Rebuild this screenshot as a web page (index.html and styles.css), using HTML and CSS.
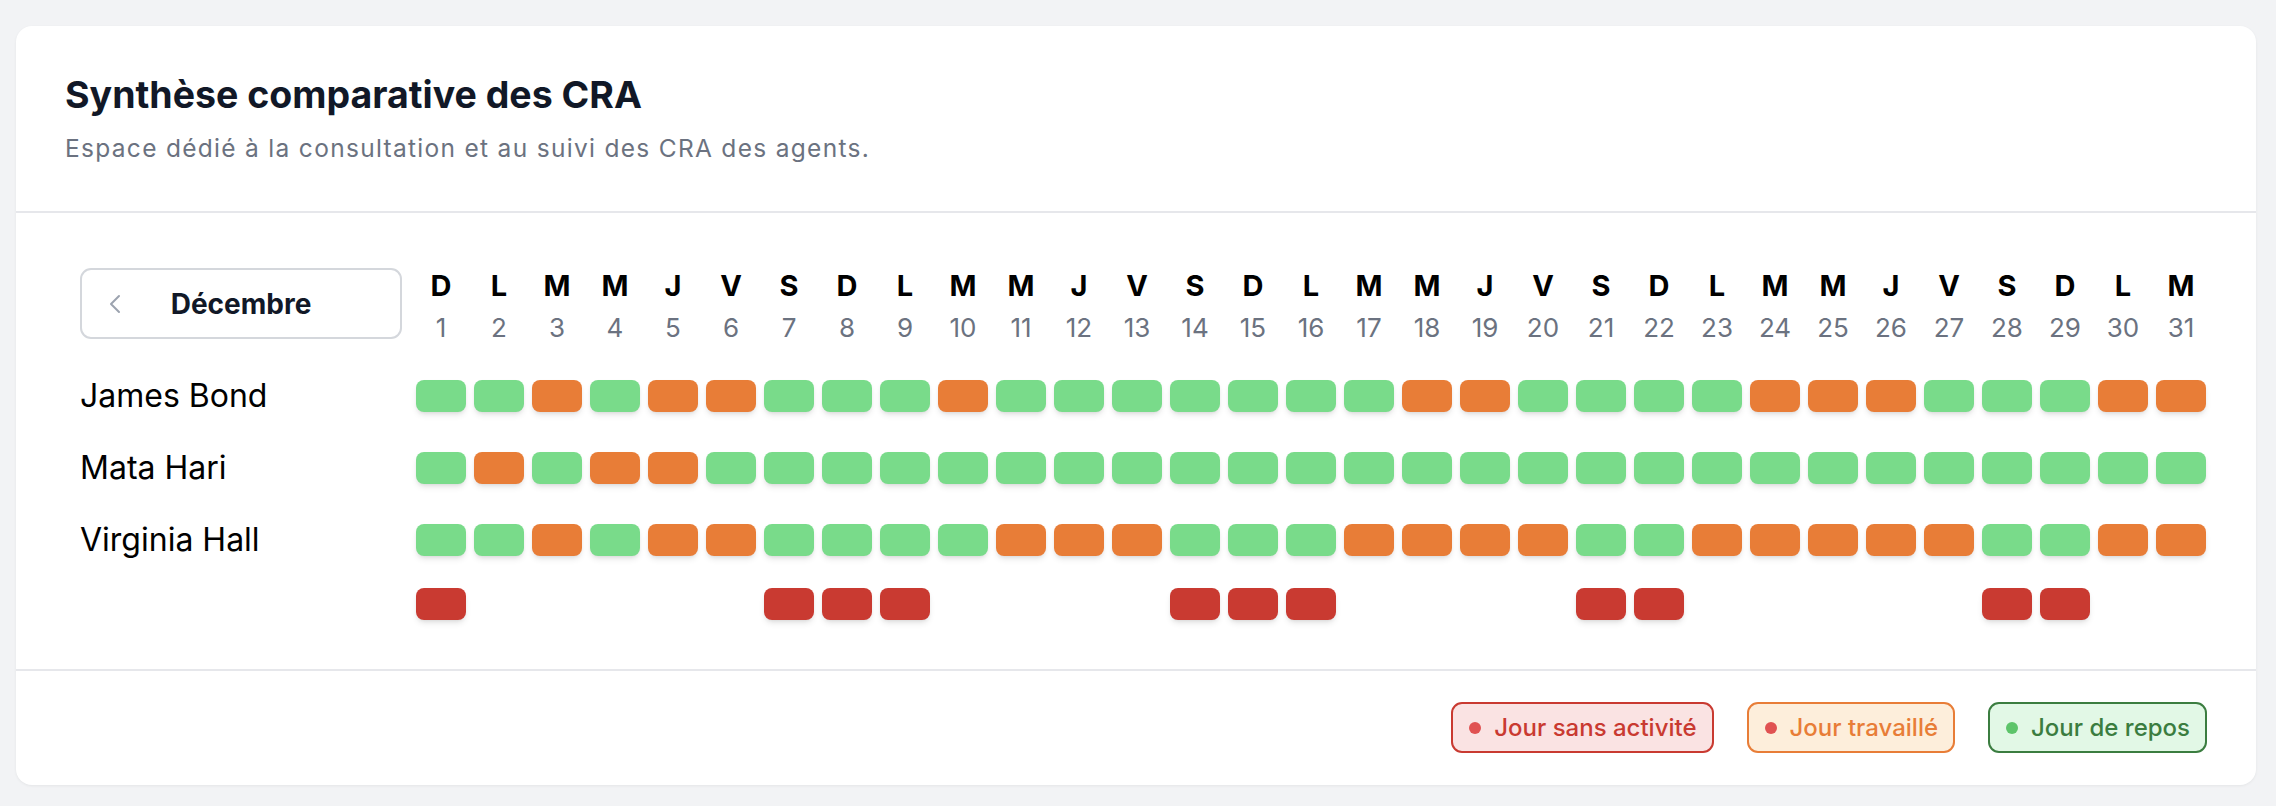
FILE: index.html
```html
<!DOCTYPE html>
<html lang="fr">
<head>
<meta charset="utf-8">
<title>Synthèse comparative des CRA</title>
<link rel="stylesheet" href="styles.css">
</head>
<body>
<main class="card">
  <header class="card-head">
    <h1 class="title">Synthèse comparative des CRA</h1>
    <p class="subtitle">Espace dédié à la consultation et au suivi des CRA des agents.</p>
  </header>
  <section class="card-body">
    <div class="board">
      <div class="month-cell">
        <button class="month-btn" type="button">
          <svg class="chev" viewBox="0 0 14 20" width="14" height="20" aria-hidden="true"><path d="M11 2 L3 10 L11 18" fill="none" stroke="#9ca3af" stroke-width="2" stroke-linecap="round" stroke-linejoin="round"/></svg>
          <span class="month-label">Décembre</span>
        </button>
      </div>
      <div class="day"><span class="dl">D</span><span class="dn">1</span></div>
      <div class="day"><span class="dl">L</span><span class="dn">2</span></div>
      <div class="day"><span class="dl">M</span><span class="dn">3</span></div>
      <div class="day"><span class="dl">M</span><span class="dn">4</span></div>
      <div class="day"><span class="dl">J</span><span class="dn">5</span></div>
      <div class="day"><span class="dl">V</span><span class="dn">6</span></div>
      <div class="day"><span class="dl">S</span><span class="dn">7</span></div>
      <div class="day"><span class="dl">D</span><span class="dn">8</span></div>
      <div class="day"><span class="dl">L</span><span class="dn">9</span></div>
      <div class="day"><span class="dl">M</span><span class="dn">10</span></div>
      <div class="day"><span class="dl">M</span><span class="dn">11</span></div>
      <div class="day"><span class="dl">J</span><span class="dn">12</span></div>
      <div class="day"><span class="dl">V</span><span class="dn">13</span></div>
      <div class="day"><span class="dl">S</span><span class="dn">14</span></div>
      <div class="day"><span class="dl">D</span><span class="dn">15</span></div>
      <div class="day"><span class="dl">L</span><span class="dn">16</span></div>
      <div class="day"><span class="dl">M</span><span class="dn">17</span></div>
      <div class="day"><span class="dl">M</span><span class="dn">18</span></div>
      <div class="day"><span class="dl">J</span><span class="dn">19</span></div>
      <div class="day"><span class="dl">V</span><span class="dn">20</span></div>
      <div class="day"><span class="dl">S</span><span class="dn">21</span></div>
      <div class="day"><span class="dl">D</span><span class="dn">22</span></div>
      <div class="day"><span class="dl">L</span><span class="dn">23</span></div>
      <div class="day"><span class="dl">M</span><span class="dn">24</span></div>
      <div class="day"><span class="dl">M</span><span class="dn">25</span></div>
      <div class="day"><span class="dl">J</span><span class="dn">26</span></div>
      <div class="day"><span class="dl">V</span><span class="dn">27</span></div>
      <div class="day"><span class="dl">S</span><span class="dn">28</span></div>
      <div class="day"><span class="dl">D</span><span class="dn">29</span></div>
      <div class="day"><span class="dl">L</span><span class="dn">30</span></div>
      <div class="day"><span class="dl">M</span><span class="dn">31</span></div>

      <div class="name">James Bond</div>
      <span class="cell g"></span><span class="cell g"></span><span class="cell o"></span><span class="cell g"></span><span class="cell o"></span><span class="cell o"></span><span class="cell g"></span><span class="cell g"></span><span class="cell g"></span><span class="cell o"></span>
      <span class="cell g"></span><span class="cell g"></span><span class="cell g"></span><span class="cell g"></span><span class="cell g"></span><span class="cell g"></span><span class="cell g"></span><span class="cell o"></span><span class="cell o"></span><span class="cell g"></span>
      <span class="cell g"></span><span class="cell g"></span><span class="cell g"></span><span class="cell o"></span><span class="cell o"></span><span class="cell o"></span><span class="cell g"></span><span class="cell g"></span><span class="cell g"></span><span class="cell o"></span>
      <span class="cell o"></span>

      <div class="name">Mata Hari</div>
      <span class="cell g"></span><span class="cell o"></span><span class="cell g"></span><span class="cell o"></span><span class="cell o"></span><span class="cell g"></span><span class="cell g"></span><span class="cell g"></span><span class="cell g"></span><span class="cell g"></span>
      <span class="cell g"></span><span class="cell g"></span><span class="cell g"></span><span class="cell g"></span><span class="cell g"></span><span class="cell g"></span><span class="cell g"></span><span class="cell g"></span><span class="cell g"></span><span class="cell g"></span>
      <span class="cell g"></span><span class="cell g"></span><span class="cell g"></span><span class="cell g"></span><span class="cell g"></span><span class="cell g"></span><span class="cell g"></span><span class="cell g"></span><span class="cell g"></span><span class="cell g"></span>
      <span class="cell g"></span>

      <div class="name">Virginia Hall</div>
      <span class="cell g"></span><span class="cell g"></span><span class="cell o"></span><span class="cell g"></span><span class="cell o"></span><span class="cell o"></span><span class="cell g"></span><span class="cell g"></span><span class="cell g"></span><span class="cell g"></span>
      <span class="cell o"></span><span class="cell o"></span><span class="cell o"></span><span class="cell g"></span><span class="cell g"></span><span class="cell g"></span><span class="cell o"></span><span class="cell o"></span><span class="cell o"></span><span class="cell o"></span>
      <span class="cell g"></span><span class="cell g"></span><span class="cell o"></span><span class="cell o"></span><span class="cell o"></span><span class="cell o"></span><span class="cell o"></span><span class="cell g"></span><span class="cell g"></span><span class="cell o"></span>
      <span class="cell o"></span>

      <div class="name name-empty"></div>
      <span class="cell r"></span><span class="slot"></span><span class="slot"></span><span class="slot"></span><span class="slot"></span><span class="slot"></span><span class="cell r"></span><span class="cell r"></span><span class="cell r"></span><span class="slot"></span>
      <span class="slot"></span><span class="slot"></span><span class="slot"></span><span class="cell r"></span><span class="cell r"></span><span class="cell r"></span><span class="slot"></span><span class="slot"></span><span class="slot"></span><span class="slot"></span>
      <span class="cell r"></span><span class="cell r"></span><span class="slot"></span><span class="slot"></span><span class="slot"></span><span class="slot"></span><span class="slot"></span><span class="cell r"></span><span class="cell r"></span><span class="slot"></span>
      <span class="slot"></span>
    </div>
  </section>
  <footer class="card-foot">
    <span class="legend legend-red"><span class="dot"></span>Jour sans activité</span>
    <span class="legend legend-orange"><span class="dot"></span>Jour travaillé</span>
    <span class="legend legend-green"><span class="dot"></span>Jour de repos</span>
  </footer>
</main>
</body>
</html>
```

FILE: styles.css
```css
* { box-sizing: border-box; }

html, body { margin: 0; }

body {
  background: #f2f3f5;
  padding: 26px 20px 21px 16px;
  font-family: Inter, "Noto Sans", "Liberation Sans", sans-serif;
  color: #111827;
}

.card {
  background: #ffffff;
  border-radius: 16px;
  box-shadow: 0 1px 3px rgba(0, 0, 0, 0.06);
  width: 2240px;
}

.card-head {
  padding: 47px 48px 47px 49px;
  border-bottom: 2px solid #e6e7eb;
}

.title {
  margin: 0;
  font-size: 37.5px;
  line-height: 44px;
  font-weight: 700;
  color: #111827;
  letter-spacing: 0;
}

.subtitle {
  margin: 15px 0 0;
  font-size: 24.5px;
  line-height: 32px;
  font-weight: 400;
  color: #6b7280;
  letter-spacing: 1.3px;
}

.card-body {
  padding: 51px 48px 49px 64px;
  border-bottom: 2px solid #e6e7eb;
}

.board {
  display: grid;
  grid-template-columns: 328px repeat(31, 50px);
  column-gap: 8px;
  row-gap: 24px;
  align-items: center;
}

.month-cell {
  align-self: start;
  padding-top: 4px;
}

.month-btn {
  display: grid;
  grid-template-columns: 1fr auto 1fr;
  align-items: center;
  width: 322px;
  height: 71px;
  padding: 0 0 0 26px;
  background: #ffffff;
  border: 2px solid #d4d7dc;
  border-radius: 11px;
  font-family: inherit;
  cursor: pointer;
}

.chev { justify-self: start; display: block; }

.month-label {
  font-size: 28px;
  font-weight: 700;
  color: #111827;
  margin-left: -26px;
}

.day {
  display: flex;
  flex-direction: column;
  align-items: center;
  align-self: start;
}

.dl {
  font-size: 29px;
  line-height: 43px;
  font-weight: 700;
  color: #000000;
}

.dn {
  font-size: 26px;
  line-height: 41px;
  font-weight: 400;
  color: #6b7280;
}

.name {
  font-size: 32px;
  line-height: 48px;
  font-weight: 400;
  color: #000000;
  white-space: nowrap;
}

.name-empty { height: 32px; }

.cell, .slot {
  display: block;
  width: 50px;
  height: 32px;
}

.cell {
  border-radius: 8px;
  box-shadow: 0 4px 6px -1px rgba(0, 0, 0, 0.10), 0 2px 4px -2px rgba(0, 0, 0, 0.10);
}

.g { background: #79db8a; }
.o { background: #e87d37; }
.r { background: #c93a31; }

.card-foot {
  display: flex;
  justify-content: flex-end;
  gap: 33px;
  padding: 31px 49px 32px 48px;
}

.legend {
  display: inline-flex;
  align-items: center;
  height: 51px;
  padding: 0 15px 0 16px;
  border: 2px solid;
  border-radius: 11px;
  font-size: 24px;
  font-weight: 500;
}

.dot {
  width: 12px;
  height: 12px;
  border-radius: 50%;
  margin-right: 13px;
}

.legend-red { background: #fae3e3; border-color: #c93a31; color: #c93a31; }
.legend-red .dot { background: #e05252; }

.legend-orange { background: #fdeedb; border-color: #e87d37; color: #e87d37; }
.legend-orange .dot { background: #e05252; }

.legend-green { background: #e2f8e6; border-color: #3b7d40; color: #3b7d40; }
.legend-green .dot { background: #5dc46a; }
```
